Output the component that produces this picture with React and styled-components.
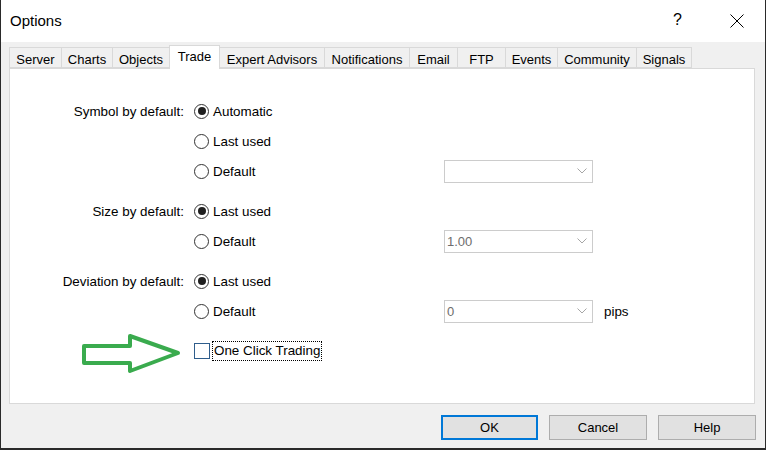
import React from "react";
import styled, { createGlobalStyle } from "styled-components";

const Global = createGlobalStyle`
  html, body {
    margin: 0;
    padding: 0;
    background: #ffffff;
  }
  body {
    font-family: "Liberation Sans", Arial, sans-serif;
    font-size: 13px;
    color: #000;
  }
`;

const Window = styled.div`
  width: 766px;
  height: 450px;
  box-sizing: border-box;
  border-left: 1px solid #2a2a2a;
  border-right: 1px solid #2a2a2a;
  border-bottom: 2px solid #2a2a2a;
  background: #f0f0f0;
  display: flex;
  flex-direction: column;
`;

const TitleBar = styled.div`
  height: 42px;
  background: #ffffff;
  display: flex;
  align-items: center;
  padding-left: 9px;
  padding-right: 21px;
  font-size: 15px;
`;

const Title = styled.div`
  flex: 1;
  margin-top: -2px;
`;

const Help = styled.div`
  font-size: 16px;
  margin-right: 48px;
  margin-top: -3px;
`;

const Body = styled.div`
  flex: 1;
  display: flex;
  flex-direction: column;
  padding: 3px 9px 0 8px;
`;

const TabStrip = styled.div`
  display: flex;
  align-items: flex-end;
  height: 23px;
  padding-left: 1px;
`;

const Tab = styled.div`
  position: relative;
  box-sizing: border-box;
  width: ${p => p.w}px;
  height: ${p => (p.active ? 24 : 21)}px;
  margin-bottom: ${p => (p.active ? -1 : 0)}px;
  margin-left: -1px;
  z-index: ${p => (p.active ? 2 : 1)};
  border: 1px solid #d9d9d9;
  border-bottom: ${p => (p.active ? "none" : "1px solid #d9d9d9")};
  background: ${p => (p.active ? "#ffffff" : "#f0f0f0")};
  display: flex;
  justify-content: center;
  padding-top: ${p => (p.active ? 3 : 4)}px;
  white-space: nowrap;
`;

const Panel = styled.div`
  width: 746px;
  height: 336px;
  box-sizing: border-box;
  border: 1px solid #d9d9d9;
  background: #ffffff;
  padding-top: 27px;
  font-size: 13.4px;
`;

const Group = styled.div`
  margin-top: ${p => (p.first ? 0 : 10)}px;
`;

const Row = styled.div`
  display: grid;
  grid-template-columns: 174px 260px 149px 1fr;
  grid-template-rows: 30px;
  height: 30px;
  align-items: center;
`;

const Label = styled.div`
  height: 30px;
  display: flex;
  justify-content: flex-end;
  align-items: center;
  white-space: nowrap;
`;

const Option = styled.div`
  display: flex;
  align-items: center;
  padding-left: 10px;
  gap: ${p => p.gap || 4}px;
`;

const RadioCircle = styled.span`
  width: 15px;
  height: 15px;
  box-sizing: border-box;
  border: 1px solid #333;
  border-radius: 50%;
  background: #fff;
  display: flex;
  align-items: center;
  justify-content: center;
  &::after {
    content: "";
    width: 8px;
    height: 8px;
    border-radius: 50%;
    background: ${p => (p.checked ? "#1f1f1f" : "transparent")};
  }
`;

const Combo = styled.div`
  height: 23px;
  box-sizing: border-box;
  border: 1px solid #cccccc;
  background: #fff;
  color: #6d6d6d;
  font-size: 13px;
  display: flex;
  align-items: center;
  padding: 0 5px 0 2px;
`;

const ComboText = styled.span`
  flex: 1;
`;

const Unit = styled.div`
  padding-left: 11px;
`;

const CheckBox = styled.span`
  width: 16px;
  height: 16px;
  box-sizing: border-box;
  border: 1px solid #2f5d8c;
  background: #fff;
`;

const FocusText = styled.span`
  outline: 1px dotted #000;
  padding: 1px 1px 2px 1px;
`;

const ArrowMark = styled.svg`
  flex-shrink: 0;
  margin-right: 3px;
  margin-top: 3px;
  margin-bottom: -3px;
`;

const Footer = styled.div`
  display: flex;
  justify-content: flex-end;
  gap: 11px;
  margin-top: 11px;
`;

const Button = styled.div`
  width: ${p => p.w || 97}px;
  height: 25px;
  box-sizing: border-box;
  border: ${p => (p.primary ? "2px solid #0078d7" : "1px solid #adadad")};
  background: #e1e1e1;
  display: flex;
  align-items: center;
  justify-content: center;
`;

const Radio = ({ checked, children }) => (
  <Option>
    <RadioCircle checked={checked} />
    <span>{children}</span>
  </Option>
);

const Chevron = () => (
  <svg width="10" height="6" viewBox="0 0 10 6">
    <polyline points="0.5,0.5 5,5 9.5,0.5" fill="none" stroke="#a6a6a6" strokeWidth="1" />
  </svg>
);

const CloseIcon = () => (
  <svg width="14" height="14" viewBox="0 0 14 14">
    <line x1="0.5" y1="0.5" x2="13.5" y2="13.5" stroke="#000" strokeWidth="1" />
    <line x1="13.5" y1="0.5" x2="0.5" y2="13.5" stroke="#000" strokeWidth="1" />
  </svg>
);

const Arrow = () => (
  <ArrowMark width="100" height="40" viewBox="0 0 100 40">
    <polygon
      points="3,12 49,12 49,2 97,19 49,37 49,29 3,29"
      fill="none"
      stroke="#3aab4e"
      strokeWidth="4"
      strokeLinejoin="round"
    />
  </ArrowMark>
);

export default () => {
  const tabs = [
    { name: "Server", w: 53 },
    { name: "Charts", w: 52 },
    { name: "Objects", w: 58 },
    { name: "Trade", w: 51, active: true },
    { name: "Expert Advisors", w: 106 },
    { name: "Notifications", w: 86 },
    { name: "Email", w: 49 },
    { name: "FTP", w: 49 },
    { name: "Events", w: 53 },
    { name: "Community", w: 80 },
    { name: "Signals", w: 56 }
  ];
  return (
    <>
      <Global />
      <Window>
        <TitleBar>
          <Title>Options</Title>
          <Help>?</Help>
          <CloseIcon />
        </TitleBar>
        <Body>
          <TabStrip>
            {tabs.map(t => (
              <Tab key={t.name} w={t.w} active={t.active}>{t.name}</Tab>
            ))}
          </TabStrip>
          <Panel>
            <Group first>
              <Row>
                <Label>Symbol by default:</Label>
                <Radio checked>Automatic</Radio>
              </Row>
              <Row>
                <Label />
                <Radio>Last used</Radio>
              </Row>
              <Row>
                <Label />
                <Radio>Default</Radio>
                <Combo><ComboText /><Chevron /></Combo>
              </Row>
            </Group>
            <Group>
              <Row>
                <Label>Size by default:</Label>
                <Radio checked>Last used</Radio>
              </Row>
              <Row>
                <Label />
                <Radio>Default</Radio>
                <Combo><ComboText>1.00</ComboText><Chevron /></Combo>
              </Row>
            </Group>
            <Group>
              <Row>
                <Label>Deviation by default:</Label>
                <Radio checked>Last used</Radio>
              </Row>
              <Row>
                <Label />
                <Radio>Default</Radio>
                <Combo><ComboText>0</ComboText><Chevron /></Combo>
                <Unit>pips</Unit>
              </Row>
            </Group>
            <Group>
              <Row>
                <Label><Arrow /></Label>
                <Option gap={3}>
                  <CheckBox />
                  <FocusText>One Click Trading</FocusText>
                </Option>
              </Row>
            </Group>
          </Panel>
          <Footer>
            <Button primary w={97}>OK</Button>
            <Button w={98}>Cancel</Button>
            <Button w={98}>Help</Button>
          </Footer>
        </Body>
      </Window>
    </>
  );
};
